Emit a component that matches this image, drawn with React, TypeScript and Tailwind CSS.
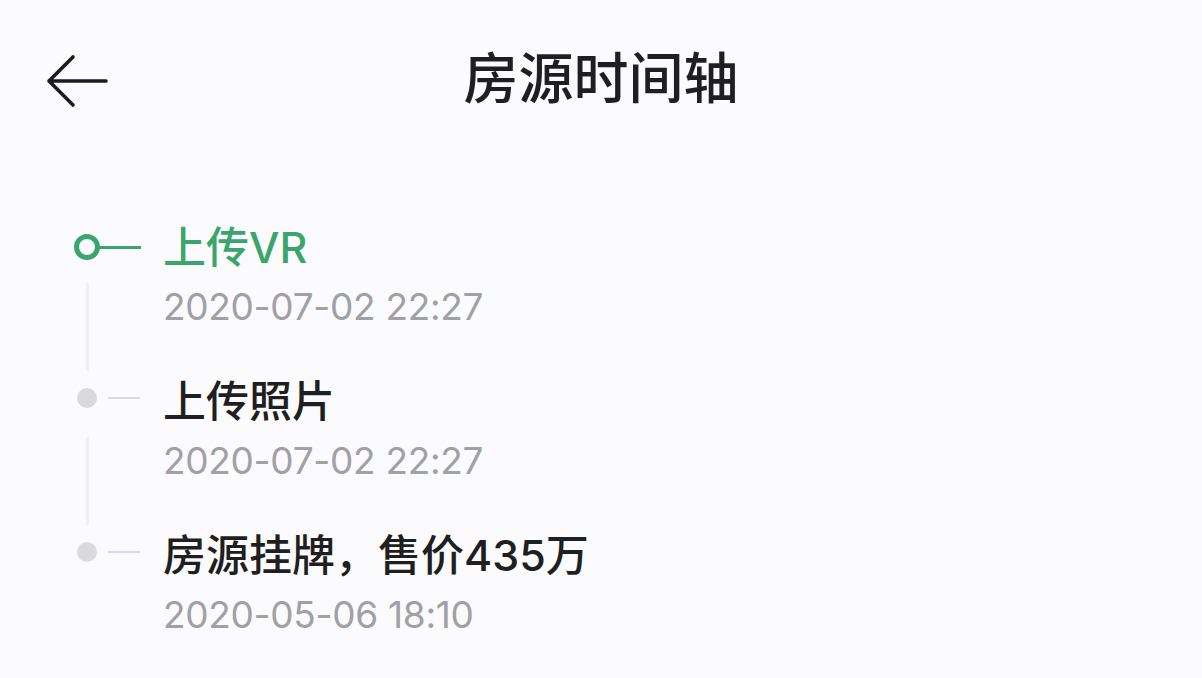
import React from "react";

const items = [
  { title: "上传VR", date: "2020-07-02 22:27", active: true },
  { title: "上传照片", date: "2020-07-02 22:27", active: false },
  { title: "房源挂牌，售价435万", date: "2020-05-06 18:10", active: false },
];

export default function App() {
  return (
    <div
      className="w-[1202px] h-[678px] bg-[#fbfbfd] overflow-hidden flex flex-col"
      style={{ fontFamily: 'Inter, "Noto Sans CJK SC", sans-serif' }}
    >
      <div className="relative h-[166px] flex items-center justify-center shrink-0">
        <div className="absolute left-[45px] top-[53px]">
          <svg width="64" height="56" viewBox="0 0 64 56" fill="none">
            <path
              d="M4 28 H61 M28 4 L4 28 L28 52"
              stroke="#1c1c1e"
              strokeWidth="3.6"
              strokeLinecap="round"
              strokeLinejoin="round"
            />
          </svg>
        </div>
        <div className="text-[55px] font-medium text-[#1f1f21] leading-none -mt-[10px]">房源时间轴</div>
      </div>
      <div className="pt-[51px] flex flex-col">
        {items.map((it, i) => {
          const last = i === items.length - 1;
          return (
            <div key={i} className="flex pb-[36px]">
              <div className="w-[163px] shrink-0 flex flex-col">
                <div className="h-[60px] flex items-center">
                  {it.active ? (
                    <div className="flex items-center ml-[74px]">
                      <div className="w-[26px] h-[26px] rounded-full border-[5px] border-[#3aa66b]" />
                      <div className="w-[42px] h-[3px] bg-[#3aa66b] -ml-[1px]" />
                    </div>
                  ) : (
                    <div className="flex items-center ml-[77px] -mt-[6px]">
                      <div className="w-[20px] h-[20px] rounded-full bg-[#dadadd]" />
                      <div className="w-[32px] h-[2px] bg-[#dcdcdf] ml-[11px]" />
                    </div>
                  )}
                </div>
                {!last && (
                  <div className="flex-1 ml-[86px] w-[3px] bg-[#f0f0f3] mt-[6px] -mb-[36px]" />
                )}
              </div>
              <div className="flex flex-col">
                <div
                  className={
                    "h-[60px] flex items-center text-[43px] font-medium leading-none " +
                    (it.active ? "text-[#3aa66b]" : "text-[#1f1f21]")
                  }
                >
                  {it.title}
                </div>
                <div className="h-[58px] flex items-center text-[37px] tracking-[-0.3px] text-[#a0a0a5] leading-none">
                  {it.date}
                </div>
              </div>
            </div>
          );
        })}
      </div>
    </div>
  );
}
